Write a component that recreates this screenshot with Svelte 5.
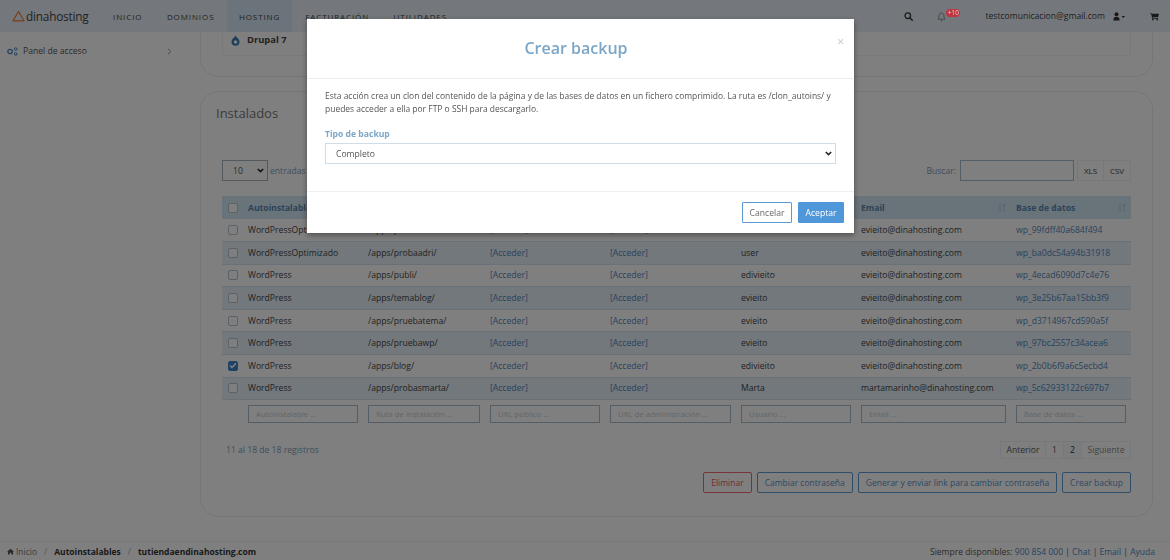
<script>
    let nav = ['INICIO', 'DOMINIOS', 'HOSTING', 'FACTURACIÓN', 'UTILIDADES'];
    let columnas = ['Autoinstalable', 'Ruta de instalación', 'URL público', 'URL de administración', 'Usuario', 'Email', 'Base de datos'];
    let filtros = ['Autoinstalable ...', 'Ruta de instalación ...', 'URL público ...', 'URL de administración ...', 'Usuario ...', 'Email ...', 'Base de datos ...'];
    let filas = [
        {app: 'WordPressOptimizado', ruta: '/apps/prueba/', user: 'edivieito', email: 'evieito@dinahosting.com', db: 'wp_99fdff40a684f494'},
        {app: 'WordPressOptimizado', ruta: '/apps/probaadri/', user: 'user', email: 'evieito@dinahosting.com', db: 'wp_ba0dc54a94b31918'},
        {app: 'WordPress', ruta: '/apps/publi/', user: 'edivieito', email: 'evieito@dinahosting.com', db: 'wp_4ecad6090d7c4e76'},
        {app: 'WordPress', ruta: '/apps/temablog/', user: 'evieito', email: 'evieito@dinahosting.com', db: 'wp_3e25b67aa15bb3f9'},
        {app: 'WordPress', ruta: '/apps/pruebatema/', user: 'evieito', email: 'evieito@dinahosting.com', db: 'wp_d3714967cd590a5f'},
        {app: 'WordPress', ruta: '/apps/pruebawp/', user: 'evieito', email: 'evieito@dinahosting.com', db: 'wp_97bc2557c34acea6'},
        {app: 'WordPress', ruta: '/apps/blog/', user: 'edivieito', email: 'evieito@dinahosting.com', db: 'wp_2b0b6f9a6c5ecbd4', marcado: true},
        {app: 'WordPress', ruta: '/apps/probasmarta/', user: 'Marta', email: 'martamarinho@dinahosting.com', db: 'wp_5c62933122c697b7'}
    ];
</script>

<div class="page">
    <header class="topbar">
        <div class="logo">
            <svg width="13" height="12" viewBox="0 0 13 12"><path d="M6.5 1.5 12 10.8H1Z" fill="none" stroke="#f07a30" stroke-width="1.2" stroke-linejoin="round"/></svg>
            <span>dinahosting</span>
        </div>
        <nav class="menu">
            {#each nav as item}
                <span class="menu-item" class:active={item === 'HOSTING'}>{item}</span>
            {/each}
        </nav>
        <div class="tools">
            <svg class="t-search" width="9" height="9" viewBox="0 0 10 10"><circle cx="4.2" cy="4.2" r="3.1" fill="none" stroke="#333" stroke-width="1.4"/><path d="M6.6 6.6 9.2 9.2" stroke="#333" stroke-width="1.6" stroke-linecap="round"/></svg>
            <span class="bell">
                <svg width="9" height="11" viewBox="0 0 9 11"><path d="M1 8.2c.9-.8 1-1.8 1-3.3C2 3.2 3 2 4.500 2S7 3.200 7 4.900c0 1.500.1 2.500 1 3.300Z" fill="none" stroke="#666" stroke-width=".7"/><path d="M3.600 9.300a1 1 0 0 0 1.800 0" fill="none" stroke="#666" stroke-width=".7"/></svg>
                <span class="badge">+10</span>
            </span>
            <span class="mail">testcomunicacion@gmail.com</span>
            <svg class="t-user" width="13" height="9" viewBox="0 0 13 9"><circle cx="3.500" cy="2.200" r="2" fill="#333"/><path d="M.4 8.500c0-2.800 1-3.700 3.100-3.700s3.100.9 3.100 3.700Z" fill="#333"/><path d="M8.500 4h3.600l-1.800 2Z" fill="#333"/></svg>
            <svg class="t-cart" width="9" height="9" viewBox="0 0 10 9"><path d="M0 .5h1.800l.3 1H10L9 5.300H3l.2 1H9v.8H2.500L1.200 1.300H0Z" fill="#333"/><circle cx="3.200" cy="8" r=".9" fill="#333"/><circle cx="8" cy="8" r=".9" fill="#333"/></svg>
        </div>
    </header>

    <div class="cuerpo">
        <aside class="lateral">
            <div class="lateral-item">
                <svg width="11" height="9" viewBox="0 0 11 9"><circle cx="3" cy="4.500" r="2.200" fill="none" stroke="#4a8ac6" stroke-width="1.300"/><circle cx="8.700" cy="2" r="1.300" fill="none" stroke="#4a8ac6" stroke-width="1"/><circle cx="8.700" cy="7" r="1.300" fill="none" stroke="#4a8ac6" stroke-width="1"/></svg>
                <span>Panel de acceso</span>
                <svg class="chev" width="5" height="7" viewBox="0 0 5 7"><path d="M1 .8 3.800 3.500 1 6.200" fill="none" stroke="#888" stroke-width=".9"/></svg>
            </div>
        </aside>

        <main class="contenido">
            <section class="panel panel-top">
                <div class="drupal">
                    <svg width="9" height="11" viewBox="0 0 9 11"><path d="M4.500.4C5 2 8.500 3.700 8.500 6.800a4 4 0 0 1-8 0C.5 3.700 4 2 4.500.4Z" fill="#3b7fb8"/><circle cx="4.500" cy="7" r="1.800" fill="#fff"/></svg>
                    <b>Drupal 7</b>
                </div>
            </section>

            <section class="panel panel-main">
                <h2>Instalados</h2>
                <div class="controles">
                    <div class="largo">
                        <select class="sel-largo"><option>10</option></select>
                        <span>entradas</span>
                    </div>
                    <div class="buscar">
                        <span>Buscar:</span>
                        <input type="text" />
                        <div class="export"><span>XLS</span><span>CSV</span></div>
                    </div>
                </div>

                <table>
                    <colgroup>
                        <col style="width: 26px" /><col style="width: 120px" /><col style="width: 122px" /><col style="width: 120px" /><col style="width: 131px" /><col style="width: 120px" /><col style="width: 155px" /><col style="width: 115px" />
                    </colgroup>
                    <thead>
                        <tr>
                            <th><span class="check"></span></th>
                            {#each columnas as c}
                                <th>{c}<svg class="orden" width="8" height="9" viewBox="0 0 8 9"><path d="M2 .5v7M.5 6 2 8l1.500-2M6 8.500v-7M4.500 3 6 1l1.500 2" fill="none" stroke="#b5c9da" stroke-width=".9"/></svg></th>
                            {/each}
                        </tr>
                    </thead>
                    <tbody>
                        {#each filas as f}
                            <tr>
                                <td>
                                    <span class="check" class:on={f.marcado}>
                                        {#if f.marcado}
                                            <svg width="8" height="7" viewBox="0 0 8 7"><path d="M1 3.500 3 5.500 7 1.200" fill="none" stroke="#fff" stroke-width="1.500"/></svg>
                                        {/if}
                                    </span>
                                </td>
                                <td>{f.app}</td>
                                <td>{f.ruta}</td>
                                <td class="enlace">[Acceder]</td>
                                <td class="enlace">[Acceder]</td>
                                <td>{f.user}</td>
                                <td>{f.email}</td>
                                <td class="enlace">{f.db}</td>
                            </tr>
                        {/each}
                    </tbody>
                    <tfoot>
                        <tr>
                            <td></td>
                            {#each filtros as p}
                                <td><input type="text" placeholder={p} /></td>
                            {/each}
                        </tr>
                    </tfoot>
                </table>

                <div class="pie-tabla">
                    <span class="registros">11 al 18 de 18 registros</span>
                    <div class="paginas">
                        <span class="ant">Anterior</span><span>1</span><span class="actual">2</span><span class="sig">Siguiente</span>
                    </div>
                </div>

                <div class="acciones">
                    <button class="btn rojo">Eliminar</button>
                    <button class="btn">Cambiar contraseña</button>
                    <button class="btn">Generar y enviar link para cambiar contraseña</button>
                    <button class="btn">Crear backup</button>
                </div>
            </section>
        </main>
    </div>

    <footer class="pie">
        <div class="migas">
            <svg width="7" height="7" viewBox="0 0 9 8"><path d="M4.500.5 9 4.300H7.800V8H5.500V5.500h-2V8H1.200V4.300H0Z" fill="#555"/></svg>
            <span class="gris">Inicio</span><i>/</i><b>Autoinstalables</b><i>/</i><b>tutiendaendinahosting.com</b>
        </div>
        <div class="ayuda">
            Siempre disponibles: <a href="#tel">900 854 000</a> | <a href="#chat">Chat</a> | <a href="#email">Email</a> | <a href="#ayuda">Ayuda</a>
        </div>
    </footer>
</div>

<div class="velo"></div>

<div class="modal">
    <div class="modal-cab">
        <h3>Crear backup</h3>
        <span class="cerrar">×</span>
    </div>
    <div class="modal-cuerpo">
        <p>Esta acción crea un clon del contenido de la página y de las bases de datos en un fichero comprimido. La ruta es /clon_autoins/ y puedes acceder a ella por FTP o SSH para descargarlo.</p>
        <label for="tipo">Tipo de backup</label>
        <select id="tipo"><option>Completo</option></select>
    </div>
    <div class="modal-pie">
        <button class="m-btn cancelar">Cancelar</button>
        <button class="m-btn aceptar">Aceptar</button>
    </div>
</div>

<style>
    :global(body) {
        margin: 0;
        background: #fff;
        font-family: 'Open Sans', sans-serif;
        font-size: 8.600px;
        color: #444;
        overflow: hidden;
    }
    .page {
        width: 1170px;
        height: 560px;
        display: flex;
        flex-direction: column;
        overflow: hidden;
    }
    .topbar {
        height: 32px;
        flex: none;
        background: #e9f1f8;
        display: flex;
        align-items: stretch;
        position: relative;
    }
    .logo {
        width: 113px;
        padding-left: 12px;
        box-sizing: border-box;
        display: flex;
        align-items: center;
        gap: 1px;
        font-size: 11.800px;
        color: #444;
        letter-spacing: -.2px;
    }
    .menu {
        display: flex;
    }
    .menu-item {
        margin-right: 24.500px;
        display: flex;
        align-items: center;
        font-size: 8px;
        letter-spacing: .9px;
        color: #444;
    }
    .menu-item.active {
        background: #d7e8f6;
        margin: 0 13px 0 -12px;
        padding: 0 12px;
    }
    .tools {
        margin-left: auto;
        display: flex;
        align-items: center;
        padding-right: 11px;
    }
    .t-search {
        margin-right: 24px;
    }
    .bell {
        display: flex;
        align-items: center;
        margin-right: 26px;
        position: relative;
        width: 22px;
    }
    .badge {
        position: absolute;
        left: 9px;
        top: -2px;
        z-index: 12;
        width: 14px;
        text-align: center;
        background: #bd3640;
        color: #e8c8ca;
        font-size: 6.500px;
        line-height: 8px;
        border-radius: 4px;
    }
    .mail {
        color: #444;
        margin-right: 8px;
    }
    .t-user {
        margin-right: 24px;
    }
    .cuerpo {
        flex: 1;
        min-height: 0;
        display: flex;
    }
    .lateral {
        width: 200px;
        flex: none;
        box-sizing: border-box;
        padding: 13px 28px 0 7px;
    }
    .lateral-item {
        display: flex;
        align-items: center;
        gap: 5px;
        color: #555;
    }
    .chev {
        margin-left: auto;
    }
    .contenido {
        width: 953px;
        flex: none;
        height: 100%;
        overflow: hidden;
    }
    .panel {
        box-sizing: border-box;
        border: 1px solid #e6edf2;
        border-radius: 18px;
        background: #fff;
    }
    .panel-top {
        height: 77px;
        margin-top: -32px;
        padding: 0 21px;
        margin-bottom: 14px;
    }
    .drupal {
        height: 55px;
        box-sizing: border-box;
        border: 1px solid #eef2f5;
        border-top: 0;
        padding: 32px 0 0 8px;
        display: flex;
        align-items: flex-start;
        gap: 7px;
        font-size: 9.400px;
        color: #444;
    }
    .drupal svg {
        margin-top: 2px;
    }
    .panel-main {
        height: 426px;
        padding: 0 21px;
    }
    h2 {
        margin: 0 0 0 -6px;
        padding-top: 11px;
        font-size: 13px;
        line-height: 20px;
        font-weight: 400;
        color: #777;
    }
    .controles {
        margin-top: 37px;
        height: 21px;
        display: flex;
        justify-content: space-between;
        align-items: center;
    }
    .largo, .buscar {
        display: flex;
        align-items: center;
        color: #7f9db8;
    }
    select {
        appearance: none;
        background: #fff url("data:image/svg+xml,%3Csvg xmlns='http://www.w3.org/2000/svg' width='7' height='5'%3E%3Cpath d='M.8 1 3.500 3.600 6.200 1' fill='none' stroke='%23222' stroke-width='1.500'/%3E%3C/svg%3E") no-repeat right 3px center;
        border-radius: 0;
    }
    .sel-largo {
        width: 46px;
        height: 21px;
        margin-right: 2px;
        border: 1px solid #a4b2bf;
        color: #555;
        font: 8.600px 'Open Sans', sans-serif;
        padding-left: 10px;
    }
    .buscar input {
        width: 114px;
        height: 21px;
        box-sizing: border-box;
        border: 1px solid #a9bccd;
        margin: 0 3px 0 4px;
    }
    .export {
        display: flex;
        border: 1px solid #eef1f4;
        height: 21px;
        box-sizing: border-box;
        color: #444;
        font-size: 8px;
    }
    .export span {
        width: 25px;
        display: flex;
        align-items: center;
        justify-content: center;
    }
    .export span + span {
        border-left: 1px solid #eef1f4;
        width: 26px;
    }
    table {
        margin-top: 15px;
        width: 909px;
        table-layout: fixed;
        border-collapse: collapse;
    }
    th {
        height: 23px;
        box-sizing: border-box;
        background: #d3e6f5;
        text-align: left;
        font-weight: 700;
        color: #5a86ac;
        padding: 0;
        position: relative;
    }
    .orden {
        position: absolute;
        right: 10px;
        top: 7px;
    }
    th:last-child .orden {
        right: 5px;
    }
    th:first-child, td:first-child {
        padding-left: 6px;
    }
    tbody tr {
        height: 22.600px;
        border-bottom: 1px solid #d5e2ec;
    }
    tbody tr:nth-child(even) {
        background: #e5f0f8;
    }
    tbody td {
        padding: 0;
        color: #444;
        white-space: nowrap;
    }
    td.enlace {
        color: #4f86bd;
    }
    .check {
        width: 10px;
        height: 10px;
        box-sizing: border-box;
        display: flex;
        align-items: center;
        justify-content: center;
        border: 1px solid #b4c3d0;
        border-radius: 2px;
        background: #fff;
    }
    .check.on {
        background: #3f86cc;
        border-color: #3f86cc;
    }
    tfoot td {
        padding: 5px 10px 0 0;
    }
    tfoot td:last-child {
        padding-right: 5px;
    }
    tfoot input {
        display: block;
        width: 100%;
        height: 18px;
        box-sizing: border-box;
        border: 1px solid #a9bccd;
        padding: 0 7px;
        font: 7.800px 'Open Sans', sans-serif;
    }
    tfoot input::placeholder {
        color: #c4ccd3;
    }
    .pie-tabla {
        margin-top: 18px;
        display: flex;
        justify-content: space-between;
        align-items: center;
        height: 18px;
    }
    .registros {
        padding-left: 4px;
        color: #7f9db8;
    }
    .paginas {
        display: flex;
        border: 1px solid #eef1f4;
        height: 18px;
        box-sizing: border-box;
    }
    .paginas span {
        width: 18px;
        box-sizing: border-box;
        display: flex;
        align-items: center;
        justify-content: center;
        border-left: 1px solid #eef1f4;
        color: #555;
    }
    .paginas .ant {
        width: 44px;
        border-left: 0;
    }
    .paginas .actual {
        background: #f6f8fa;
        color: #333;
    }
    .paginas .sig {
        width: 49px;
        color: #888;
    }
    .acciones {
        margin-top: 13px;
        display: flex;
        justify-content: flex-end;
        gap: 5px;
    }
    .btn {
        height: 21px;
        padding: 0 7px;
        background: #fff;
        border: 1px solid #5c9ad6;
        border-radius: 2px;
        color: #5c93c8;
        font: 8.500px 'Open Sans', sans-serif;
    }
    .btn.rojo {
        border-color: #ec6a73;
        color: #ea5560;
    }
    .pie {
        height: 19px;
        flex: none;
        box-sizing: border-box;
        border-top: 1px solid #eef0f2;
        display: flex;
        justify-content: space-between;
        align-items: center;
        padding: 0 15px 0 7px;
        font-size: 8.500px;
    }
    .migas {
        display: flex;
        align-items: center;
        gap: 3px;
        color: #333;
    }
    .migas svg {
        margin-right: -1px;
    }
    .migas .gris {
        color: #777;
    }
    .migas i {
        font-style: normal;
        color: #aaa;
        padding: 0 4px;
    }
    .ayuda {
        color: #555;
    }
    .ayuda a {
        color: #4f86bd;
        text-decoration: none;
    }
    .velo {
        position: fixed;
        inset: 0;
        background: rgba(0, 0, 0, .5);
        z-index: 10;
    }
    .modal {
        position: fixed;
        left: 307px;
        top: 19px;
        width: 547px;
        height: 214px;
        background: #fff;
        z-index: 11;
        box-shadow: 0 2px 6px rgba(0, 0, 0, .4);
        display: flex;
        flex-direction: column;
    }
    .modal-cab {
        height: 60px;
        flex: none;
        box-sizing: border-box;
        border-bottom: 1px solid #e9edf0;
        position: relative;
    }
    h3 {
        margin: 0;
        padding-right: 9px;
        text-align: center;
        font-size: 16px;
        line-height: 59px;
        font-weight: 600;
        color: #7ba6c8;
    }
    .cerrar {
        position: absolute;
        right: 10px;
        top: 16px;
        font-size: 12px;
        line-height: 14px;
        color: #c4c4c4;
    }
    .modal-cuerpo {
        flex: 1;
        padding: 10px 18px 0;
    }
    .modal-cuerpo p {
        margin: 0;
        font-size: 8.480px;
        line-height: 13px;
        color: #555;
    }
    label {
        display: block;
        margin-top: 13px;
        line-height: 13px;
        font-weight: 700;
        color: #7ba6c8;
    }
    #tipo {
        display: block;
        margin-top: 2px;
        width: 511px;
        height: 21px;
        box-sizing: border-box;
        border: 1px solid #cfdde9;
        color: #555;
        padding-left: 10px;
        font: 8.600px 'Open Sans', sans-serif;
    }
    .modal-pie {
        height: 42px;
        flex: none;
        box-sizing: border-box;
        border-top: 1px solid #eef1f4;
        display: flex;
        justify-content: flex-end;
        align-items: center;
        gap: 6px;
        padding: 0 10px 0 0;
    }
    .m-btn {
        height: 21px;
        font: 8.600px 'Open Sans', sans-serif;
        border-radius: 1px;
    }
    .cancelar {
        width: 50px;
        padding: 0;
        background: #fff;
        border: 1px solid #5c9ad6;
        color: #666;
    }
    .aceptar {
        width: 46px;
        padding: 0;
        background: #4f97d8;
        border: 1px solid #4f97d8;
        color: #fff;
    }
</style>
